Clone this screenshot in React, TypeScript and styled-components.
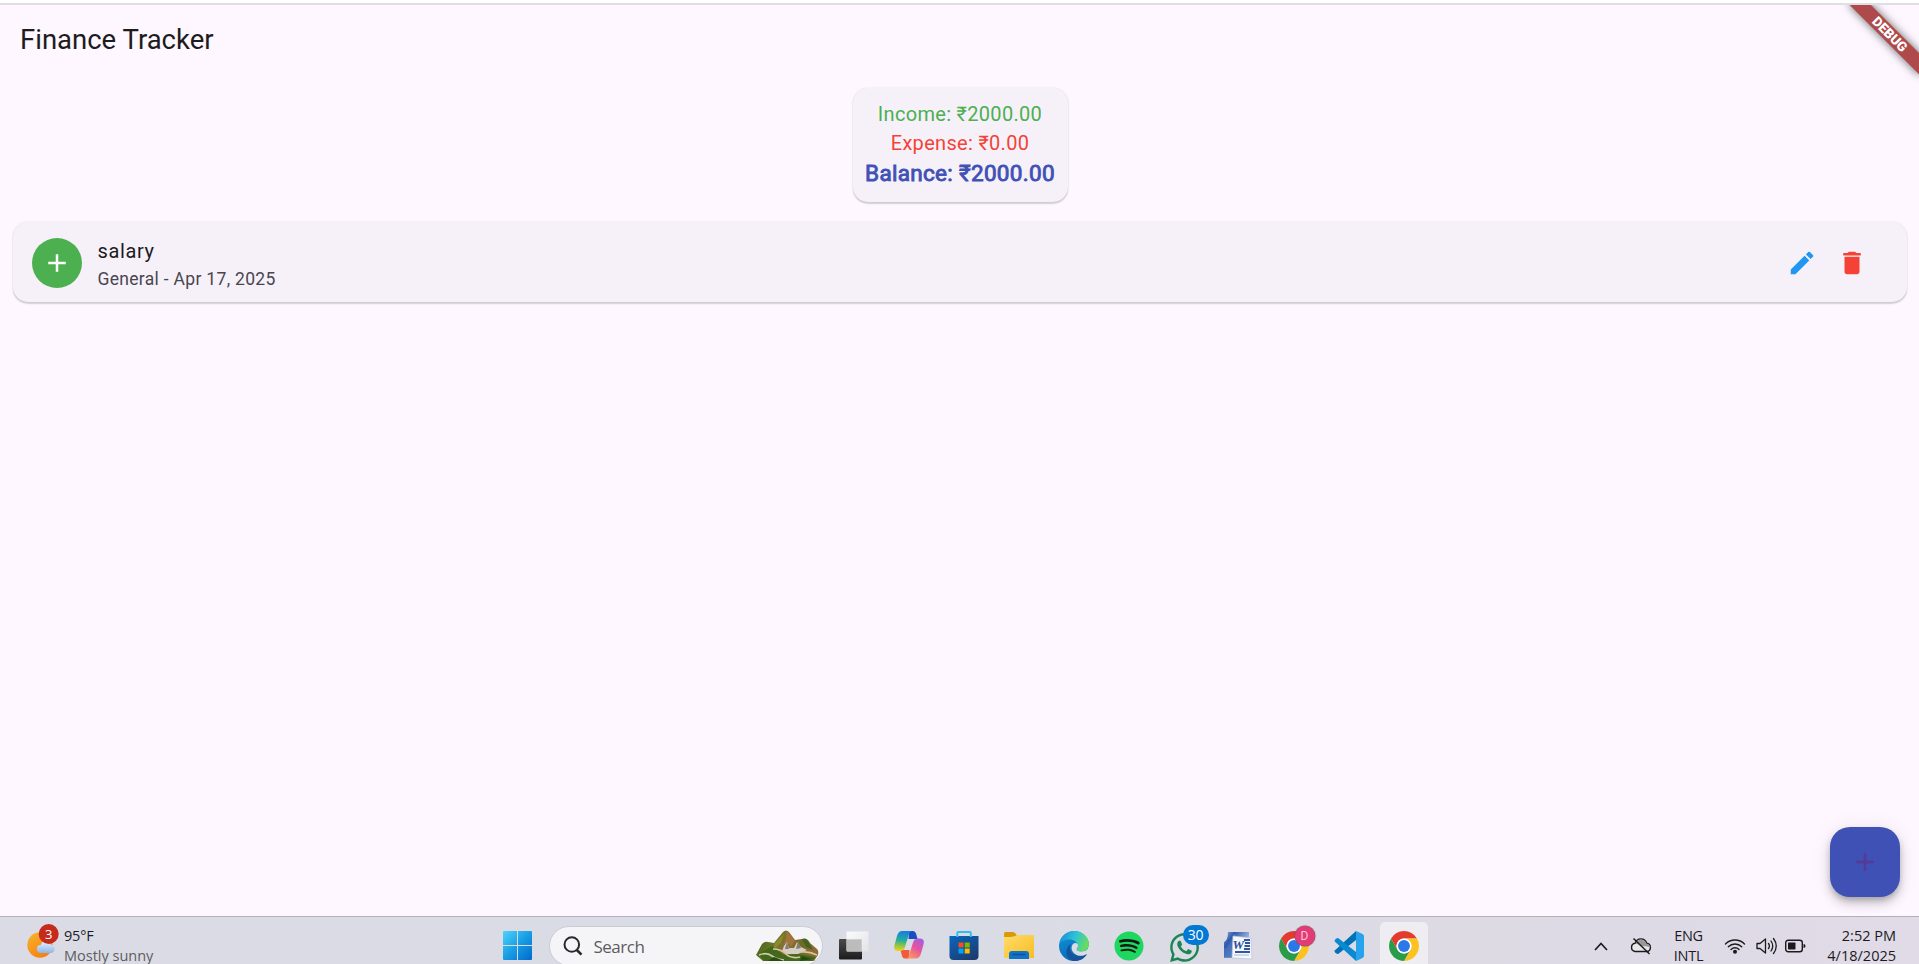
import React from "react";
import styled, { createGlobalStyle } from "styled-components";
import { MdAdd, MdDelete, MdEdit } from "react-icons/md";
import { FaSpotify, FaWhatsapp } from "react-icons/fa";

const GlobalStyle = createGlobalStyle`
  * { box-sizing: border-box; }
  body { margin: 0; overflow: hidden; background: #fef7ff; }
  svg { display: block; flex: none; }
`;

const Screen = styled.div`
  display: flex;
  flex-direction: column;
  width: 1919px;
  height: 964px;
  overflow: hidden;
  font-family: Roboto, sans-serif;
`;

const BrowserEdge = styled.div`
  flex: none;
  height: 5px;
  background: #fff;
  border-bottom: 2px solid #dfdfe0;
`;

const AppSurface = styled.main`
  position: relative;
  flex: none;
  height: 911px;
  overflow: hidden;
  background: #fef7ff;
`;

const AppBar = styled.header`
  display: flex;
  align-items: center;
  height: 70px;
  padding: 0 0 2px 20px;
`;

const Title = styled.h1`
  margin: 0;
  color: #1d1b20;
  font-size: 27.5px;
  font-weight: 400;
  line-height: 35px;
`;

const Card = styled.section`
  background: #f6f1f9;
  border-radius: 15px;
  box-shadow: 0 1.5px 1.5px rgba(0, 0, 0, 0.16), 0 0 2px rgba(0, 0, 0, 0.1);
`;

const SummaryCard = styled(Card)`
  display: flex;
  flex-direction: column;
  align-items: center;
  width: 215px;
  height: 114.5px;
  margin: 12.5px auto 20px 852.5px;
  padding-top: 12.5px;
`;

const SummaryLine = styled.div<{ $color: string; $strong?: boolean }>`
  color: ${(p) => p.$color};
  font-size: ${(p) => (p.$strong ? 22.5 : 20)}px;
  font-weight: 400;
  line-height: ${(p) => (p.$strong ? 31 : 29)}px;
  letter-spacing: 0.31px;
  white-space: nowrap;
  -webkit-text-stroke: ${(p) => (p.$strong ? "0.9px currentColor" : "0")};
`;

const EntryCard = styled(Card)`
  display: flex;
  align-items: center;
  height: 80px;
  margin: 0 12px 0 12.5px;
  padding: 1px 29.9px 0 19.9px;
`;

const Avatar = styled.div`
  display: grid;
  place-items: center;
  width: 50px;
  height: 50px;
  border-radius: 50%;
  background: #4caf50;
  color: #fff;
`;

const EntryText = styled.div`
  flex: 1;
  margin-left: 15.1px;
  padding-top: 3px;
`;

const EntryName = styled.div`
  color: #1d1b20;
  font-size: 20px;
  line-height: 29px;
  letter-spacing: 0.625px;
`;

const EntryMeta = styled.div`
  color: #49454f;
  font-size: 17.5px;
  line-height: 26px;
  letter-spacing: 0.31px;
`;

const IconButton = styled.button<{ $color: string }>`
  display: grid;
  place-items: center;
  width: 50px;
  height: 50px;
  padding: 0;
  border: 0;
  background: none;
  color: ${(p) => p.$color};
`;

const Fab = styled.button`
  position: absolute;
  right: 19px;
  bottom: 19px;
  display: grid;
  place-items: center;
  width: 70px;
  height: 70px;
  padding: 0;
  border: 0;
  border-radius: 20px;
  background: #3f51b5;
  color: #563a93;
  box-shadow: 0 4px 6px -1px rgba(0, 0, 0, 0.22), 0 7px 12px rgba(0, 0, 0, 0.14),
    0 1px 20px rgba(0, 0, 0, 0.08);
`;

const DebugBanner = styled.div`
  position: absolute;
  top: 34px;
  right: -50px;
  width: 100px;
  height: 15px;
  transform: rotate(45deg);
  transform-origin: 50px -34px;
  background: #ae4a4c;
  box-shadow: 0 0 10px rgba(0, 0, 0, 0.6);
  color: #fff;
  font-size: 13.5px;
  font-weight: 900;
  line-height: 15px;
  text-align: center;
`;

const Taskbar = styled.footer`
  display: grid;
  grid-template-columns: 490px 1fr auto;
  flex: none;
  height: 60px;
  border-top: 1px solid #b1afb8;
  background: linear-gradient(90deg, #dadbe4, #dadce5 50%, #dddae4 75%, #e0dbe7);
  font-family: "Open Sans", "Noto Sans", sans-serif;
  color: #1b1b1f;
`;

const Weather = styled.div`
  display: flex;
  align-items: flex-start;
  padding: 6px 0 0 26px;
`;

const WeatherIcon = styled.div`
  width: 38px;
  height: 40px;
`;

const WeatherText = styled.div`
  padding-top: 3px;
`;

const TextLine = styled.div<{ $muted?: boolean; $tight?: number }>`
  color: ${(p) => (p.$muted ? "#5d5d62" : "#1b1b1f")};
  font-size: 14.5px;
  line-height: 20px;
  letter-spacing: ${(p) => p.$tight ?? 0}px;
  white-space: nowrap;
`;

const Dock = styled.nav`
  display: flex;
  align-items: flex-start;
`;

const DockItem = styled.div<{ $active?: boolean }>`
  position: relative;
  display: flex;
  justify-content: center;
  width: ${(p) => (p.$active ? 48 : 55)}px;
  height: 50px;
  margin: ${(p) => (p.$active ? "5px 3.5px 0" : "5px 0 0")};
  padding-top: 9px;
  border-radius: 5px;
  background: ${(p) => (p.$active ? "#eeedf2" : "transparent")};
`;

const SearchBox = styled.div`
  display: flex;
  align-items: center;
  width: 274px;
  height: 40px;
  margin: 9px 4px 0 3.5px;
  padding: 0 3px 0 13px;
  border: 1px solid #cbccd5;
  border-radius: 20px;
  background: #f5f5f8;
`;

const SearchLabel = styled.span`
  flex: 1;
  margin-left: 11px;
  color: #5c5c60;
  font-size: 17px;
  letter-spacing: -0.5px;
`;

const CountBadge = styled.span`
  position: absolute;
  top: 3px;
  right: 3px;
  width: 26px;
  height: 20px;
  border-radius: 10px;
  background: #0078d4;
  color: #fff;
  font-size: 14px;
  line-height: 20px;
  text-align: center;
  letter-spacing: -0.3px;
`;

const ProfileBadge = styled.span`
  position: absolute;
  top: 4px;
  right: 7px;
  width: 20px;
  height: 20px;
  border-radius: 50%;
  background: #e33b75;
  box-shadow: 0 0 1px 0.5px #8c4860;
  color: #f8c4d6;
  font: 12px/20px Roboto, sans-serif;
  text-align: center;
`;

const Tray = styled.div`
  display: flex;
  align-items: flex-start;
  padding-right: 23px;
`;

const TrayIcon = styled.div<{ $width: number }>`
  display: grid;
  place-items: center;
  width: ${(p) => p.$width}px;
  height: 58px;
`;

const TrayText = styled.div<{ $width: number; $align: string }>`
  width: ${(p) => p.$width}px;
  padding-top: 9px;
  text-align: ${(p) => p.$align};
`;

const Clock = styled.div`
  width: 85px;
  padding-top: 9px;
  text-align: right;
`;

const WeatherGlyph = () => (
  <svg width="36" height="40" viewBox="0 0 36 40">
    <defs>
      <linearGradient id="sun" x1="0" y1="0" x2="0.6" y2="1">
        <stop stopColor="#f7b52c" />
        <stop offset="1" stopColor="#f5820f" />
      </linearGradient>
      <linearGradient id="cloud" x1="0" y1="0" x2="0" y2="1">
        <stop stopColor="#e4f2ff" />
        <stop offset="1" stopColor="#8fb4ea" />
      </linearGradient>
    </defs>
    <circle cx="14" cy="22" r="12.7" fill="url(#sun)" />
    <path d="M15 30a4 4 0 0 1-.3-8 5.3 5.3 0 0 1 9.8-.7 4.4 4.4 0 0 1 .5 8.7z" fill="url(#cloud)" />
    <circle cx="22.7" cy="11" r="10" fill="#c42b1c" />
    <text x="22.7" y="15.8" fontSize="13" textAnchor="middle" fill="#fff">3</text>
  </svg>
);

const StartGlyph = () => (
  <svg width="29" height="29" viewBox="0 0 29 29">
    <defs>
      <linearGradient id="win" gradientUnits="userSpaceOnUse" x1="0" y1="0" x2="29" y2="29">
        <stop stopColor="#4fd3fc" />
        <stop offset="0.5" stopColor="#189de4" />
        <stop offset="1" stopColor="#0069cc" />
      </linearGradient>
    </defs>
    <path d="M1 0H14V14H0V1Q0 0 1 0ZM15 0H28Q29 0 29 1V14H15ZM0 15H14V29H1Q0 29 0 28ZM15 15H29V28Q29 29 28 29H15Z" fill="url(#win)" />
  </svg>
);

const SearchGlyph = () => (
  <svg width="20" height="20" viewBox="0 0 20 20" fill="none" stroke="#29292d" strokeWidth="2">
    <circle cx="8.8" cy="8.5" r="7.3" />
    <path d="M13.8 14l4.7 4.6" strokeWidth="2.6" />
  </svg>
);

const MountainGlyph = () => (
  <svg width="63" height="32" viewBox="0 0 63 32">
    <defs>
      <linearGradient id="ridge" x1="0" y1="0" x2="1" y2="0.3">
        <stop stopColor="#35591a" />
        <stop offset="0.4" stopColor="#6d7926" />
        <stop offset="0.6" stopColor="#8f6a34" />
        <stop offset="0.8" stopColor="#6d6a24" />
        <stop offset="1" stopColor="#8c6b33" />
      </linearGradient>
    </defs>
    <path d="M0 25L6 14q3-3 6-2l6 1 9-11q3-3 6 0l6 8 7-1q5-2 8 4l7 6q2 2 1 6l-4 6H7z" fill="url(#ridge)" />
    <path d="M30 2q2-1 3 1l6 8-4 6-3-4-5 2q4-6 3-13z" fill="#a0743b" />
    <path d="M19 13l9-9-3 9-8 7z" fill="#8d892e" />
    <path d="M46 9q5-1 7 4l4 7-7-3z" fill="#456421" />
    <path d="M2 24l14-8 12 9 14-1 18 3-4 4H8z" fill="#42691b" />
    <path d="M26 21l2-5 3-4 2 6 5 0 3-6 4 5 6 3-9 4-11 0z" fill="#d5cfc3" />
    <path d="M31 12l2 7-4 0zM42 11l3 7-5 1z" fill="#827b70" />
    <path d="M3 25q7-3 13 1t12 4M17 19q8 0 13 5t14 3M45 22q8-1 16 3" fill="none" stroke="#d3c7a4" strokeWidth="1.700" />
    <path d="M18 27l10 4H12zM46 26l10 3-12 2z" fill="#254b12" />
  </svg>
);

const TaskViewGlyph = () => (
  <svg width="30" height="30" viewBox="0 0 30 30">
    <defs>
      <linearGradient id="pane" x1="0" y1="0" x2="0" y2="1">
        <stop stopColor="#4b4b4a" />
        <stop offset="1" stopColor="#1c1c1d" />
      </linearGradient>
      <linearGradient id="glass" x1="0" y1="0" x2="1" y2="1">
        <stop stopColor="#ffffff" />
        <stop offset="1" stopColor="#e4e4e6" />
      </linearGradient>
    </defs>
    <rect x="0" y="8" width="23" height="20.5" rx="1" fill="url(#pane)" />
    <rect x="7.5" y="0.5" width="22" height="20" rx="1" fill="url(#glass)" opacity="0.9" />
    <path d="M7.500 8.500H22.500V20.500H8.500q-1 0-1-1z" fill="#bcbcbd" />
  </svg>
);

const CopilotGlyph = () => (
  <svg width="30" height="28" viewBox="0 0 30 28">
    <defs>
      <linearGradient id="cpA" x1="0.3" y1="0" x2="0.2" y2="1">
        <stop stopColor="#167fe0" />
        <stop offset="0.45" stopColor="#26ad9d" />
        <stop offset="0.75" stopColor="#98c83c" />
        <stop offset="1" stopColor="#f5cf22" />
      </linearGradient>
      <linearGradient id="cpB" x1="0.8" y1="0" x2="0.2" y2="1">
        <stop stopColor="#a55be6" />
        <stop offset="0.45" stopColor="#e4559e" />
        <stop offset="1" stopColor="#ff9b59" />
      </linearGradient>
    </defs>
    <path d="M15 0h4q2.3 0 3 2.5L23.5 8h-9z" fill="#174fc2" />
    <path d="M15 27.5h-4q-2.3 0-3-2.5L6.5 19h9z" fill="#f05c39" />
    <path d="M8 0h10q-2 0-3 3l-4 13q-1 4-5 4H4Q-1 20 .5 14L3 5Q4.500 0 8 0z" fill="url(#cpA)" />
    <path d="M22 27.500H12q2 0 3-3l4-13q1-4 5-4h2q5 0 3.500 6L27 22.500Q25.500 27.500 22 27.500z" fill="url(#cpB)" />
  </svg>
);

const StoreGlyph = () => (
  <svg width="30" height="30" viewBox="0 0 30 30">
    <defs>
      <linearGradient id="bag" x1="0" y1="0" x2="0.7" y2="1">
        <stop stopColor="#0a66bd" />
        <stop offset="1" stopColor="#1c3c70" />
      </linearGradient>
    </defs>
    <path d="M.5 5h29v20q0 4-4 4h-21q-4 0-4-4z" fill="url(#bag)" />
    <path d="M8.300 6V2q0-1 1-1h11.500q1 0 1 1v4" fill="none" stroke="#31bdf4" strokeWidth="2" />
    <path d="M9.500 11.500h5v5h-5z" fill="#f25022" />
    <path d="M15.700 11.500h5v5h-5z" fill="#7fba00" />
    <path d="M9.500 17.500h5v5h-5z" fill="#00a4ef" />
    <path d="M15.700 17.500h5v5h-5z" fill="#ffb900" />
  </svg>
);

const FolderGlyph = () => (
  <svg width="30" height="28" viewBox="0 0 30 28">
    <defs>
      <linearGradient id="folder" x1="0" y1="0" x2="1" y2="1">
        <stop stopColor="#ffdc69" />
        <stop offset="1" stopColor="#f8bd24" />
      </linearGradient>
    </defs>
    <path d="M0 7V2.500Q0 1 1.500 1H9q1.500 0 2.500 1.500L13 5z" fill="#d89a08" />
    <path d="M0 6h10l3-2h15.500Q30 4 30 5.500V27H0z" fill="url(#folder)" />
    <path d="M5 28v-5q0-3 3-3h14q3 0 3 3v5z" fill="#0e73c9" />
    <path d="M9 23.500h12" stroke="#174f92" strokeWidth="1.300" strokeLinecap="round" />
  </svg>
);

const EdgeGlyph = () => (
  <svg width="30" height="30" viewBox="0 0 30 30">
    <defs>
      <linearGradient id="edTop" x1="0" y1="0.2" x2="1" y2="0.5">
        <stop stopColor="#188bd2" />
        <stop offset="0.5" stopColor="#2dc2da" />
        <stop offset="1" stopColor="#69de59" />
      </linearGradient>
      <linearGradient id="edBody" x1="0" y1="0" x2="0.4" y2="1">
        <stop stopColor="#1496de" />
        <stop offset="1" stopColor="#0868b6" />
      </linearGradient>
    </defs>
    <path d="M15 0A15 15 0 1 0 27 24L30 13A15 15 0 0 0 15 0z" fill="url(#edBody)" />
    <path d="M.4 12.500C1.700 5 8 0 15 0c9 0 15 6.500 15 13 0 5-4 7.500-8 7.500-3 0-4.500-1.300-4.500-2.200 0-.8 1-1.300 1-3.300C18.500 11 15 8.500 10.500 8.500 6 8.500 2 10.500.4 12.500z" fill="url(#edTop)" />
    <path d="M12 12.500c-3 5 0 12 7 12.500 3 .2 5.500-.8 7.300-2 1-.6 1.700.2 1.200 1C24.500 28.500 20 30 15 30 9 28.500 6 23.500 8 18c.8-2.500 2.300-4.500 4-5.500z" fill="#15539a" />
    <path d="M17.800 17.500c-.5 1 0 2.700 3.700 3 3.500.1 6.200-1 8.200-3.500l.3 1c-.5 3-2 5-3 5.500-4 2.300-9 1.500-12-1.300-3-3-3-6.700-1-9.200 2-2 5-.8 5 1.500 0 1.300-.6 2-1.200 3z" fill="#dadce5" />
  </svg>
);

const SpotifyMark = styled.div`
  width: 30px;
  height: 30px;
  border-radius: 50%;
  background: radial-gradient(circle, #101b14 62%, transparent 64%);
  color: #1ed760;
`;

const WordGlyph = () => (
  <svg width="30" height="30" viewBox="0 0 30 30">
    <defs>
      <linearGradient id="wd" x1="0" y1="0" x2="1" y2="0.7">
        <stop stopColor="#93b2e0" />
        <stop offset="0.3" stopColor="#2f58ab" />
        <stop offset="1" stopColor="#dbe8f7" />
      </linearGradient>
    </defs>
    <path d="M4 1h21v25H0V11Q4 9 4 1z" fill="url(#wd)" />
    <path d="M0 17q7 1 9-14l3 0v24H0z" fill="#4671bc" opacity="0.75" />
    <path d="M9 5l18 2 1 21-20-1z" fill="#f4f7fc" stroke="#b8c4da" strokeWidth="0.700" />
    <path d="M20 9h6M21 12h5M20.500 15h5.500M20 18h6M11 21h15" stroke="#34569f" strokeWidth="1.900" />
    <path d="M10 24h15" stroke="#a9bad9" strokeWidth="1" />
    <text x="8.500" y="18" fontFamily="Liberation Serif, serif" fontWeight="700" fontStyle="italic" fontSize="13" fill="#2b4e9b">W</text>
  </svg>
);

const ChromeGlyph = () => (
  <svg width="30" height="30" viewBox="2 2 44 44">
    <path d="M4.950 13A22 22 0 0 1 43.050 13H24A11 11 0 0 0 14.470 29.500z" fill="#e33b2e" />
    <path d="M43.050 13A22 22 0 0 1 24 46L33.530 29.500A11 11 0 0 0 24 13z" fill="#fcc31e" />
    <path d="M24 46A22 22 0 0 1 4.950 13L14.470 29.500A11 11 0 0 0 33.530 29.500z" fill="#2a9b48" />
    <circle cx="24" cy="24" r="11" fill="#fff" />
    <circle cx="24" cy="24" r="8.700" fill="#2b78e8" />
  </svg>
);

const CodeGlyph = () => (
  <svg width="30" height="30" viewBox="0 0 30 30">
    <path d="M22 0L1 19.200q-1 1 0 2l1.500 1.400q1 .8 2 .1L22 9z" fill="#0072b7" />
    <path d="M22 30L1 10.800q-1-1 0-2L2.500 7.400q1-.8 2-.1L22 21z" fill="#0a89d1" />
    <path d="M22 0l6.500 3Q30 3.700 30 5.300V24.700q0 1.600-1.500 2.300L22 30z" fill="#27a3ee" />
  </svg>
);

const ChevronGlyph = () => (
  <svg width="14" height="9" viewBox="0 0 14 9" fill="none" stroke="#1b1b1f" strokeWidth="1.700">
    <path d="M1 8l6-6.500L13 8" />
  </svg>
);

const CloudOffGlyph = () => (
  <svg width="22" height="18" viewBox="0 0 22 18">
    <path d="M5 14.500a4.200 4.200 0 0 1 .2-8.300 6 6 0 0 1 11.500 0 4.200 4.200 0 0 1 .3 8.300z" fill="#e8e8e8" stroke="#1b1b1f" strokeWidth="1.400" />
    <path d="M5.500 6.500a5.800 5.800 0 0 1 10.800 0q3.500.5 4 4-5-2-8-1-4-2.500-6.800-3z" fill="#999" />
    <path d="M3.500 1.500l16 15.500" stroke="#1b1b1f" strokeWidth="1.500" />
  </svg>
);

const WifiGlyph = () => (
  <svg width="22" height="17" viewBox="0 0 22 17" fill="none" stroke="#1b1b1f" strokeWidth="1.400" strokeLinecap="round">
    <path d="M1.500 6a13.400 13.400 0 0 1 19 0M4.300 8.700a9.500 9.500 0 0 1 13.400 0M7 11.400a5.700 5.700 0 0 1 8 0" />
    <circle cx="11" cy="13.700" r="1.300" fill="#1b1b1f" />
  </svg>
);

const SpeakerGlyph = () => (
  <svg width="22" height="18" viewBox="0 0 22 18" fill="none" stroke="#1b1b1f" strokeWidth="1.300" strokeLinecap="round" strokeLinejoin="round">
    <path d="M1 6.500h3L9.500 2v14L4 11.500H1zM12.500 6.500q1.800 2.500 0 5M15 4q3.500 5 0 10M17.500 1.500q5.500 7.500 0 15" />
  </svg>
);

const BatteryGlyph = () => (
  <svg width="21" height="14" viewBox="0 0 21 14">
    <rect x="0.700" y="1.200" width="16.600" height="11.600" rx="2.500" fill="none" stroke="#1b1b1f" strokeWidth="1.400" />
    <rect x="3" y="3.500" width="7.500" height="7" rx="0.800" fill="#1b1b1f" />
    <path d="M18.500 5q2 0 2 2t-2 2z" fill="#1b1b1f" />
  </svg>
);

export default function App() {
  return (
    <Screen>
      <GlobalStyle />
      <BrowserEdge />
      <AppSurface>
        <AppBar>
          <Title>Finance Tracker</Title>
        </AppBar>
        <SummaryCard>
          <SummaryLine $color="#4caf50">Income: ₹2000.00</SummaryLine>
          <SummaryLine $color="#f44336">Expense: ₹0.00</SummaryLine>
          <SummaryLine $color="#3f51b5" $strong>Balance: ₹2000.00</SummaryLine>
        </SummaryCard>
        <EntryCard>
          <Avatar><MdAdd size={30} /></Avatar>
          <EntryText>
            <EntryName>salary</EntryName>
            <EntryMeta>General - Apr 17, 2025</EntryMeta>
          </EntryText>
          <IconButton $color="#2196f3" aria-label="Edit"><MdEdit size={30} /></IconButton>
          <IconButton $color="#f44336" aria-label="Delete"><MdDelete size={30} /></IconButton>
        </EntryCard>
        <Fab aria-label="Add"><MdAdd size={30} /></Fab>
        <DebugBanner>DEBUG</DebugBanner>
      </AppSurface>
      <Taskbar>
        <Weather>
          <WeatherIcon><WeatherGlyph /></WeatherIcon>
          <WeatherText>
            <TextLine $tight={-0.2}>95°F</TextLine>
            <TextLine $muted>Mostly sunny</TextLine>
          </WeatherText>
        </Weather>
        <Dock>
          <DockItem><StartGlyph /></DockItem>
          <SearchBox>
            <SearchGlyph />
            <SearchLabel>Search</SearchLabel>
            <MountainGlyph />
          </SearchBox>
          <DockItem><TaskViewGlyph /></DockItem>
          <DockItem><CopilotGlyph /></DockItem>
          <DockItem><StoreGlyph /></DockItem>
          <DockItem><FolderGlyph /></DockItem>
          <DockItem><EdgeGlyph /></DockItem>
          <DockItem><SpotifyMark><FaSpotify size={30} /></SpotifyMark></DockItem>
          <DockItem>
            <FaWhatsapp size={33} color="#1b8654" />
            <CountBadge>30</CountBadge>
          </DockItem>
          <DockItem><WordGlyph /></DockItem>
          <DockItem>
            <ChromeGlyph />
            <ProfileBadge>D</ProfileBadge>
          </DockItem>
          <DockItem><CodeGlyph /></DockItem>
          <DockItem $active><ChromeGlyph /></DockItem>
        </Dock>
        <Tray>
          <TrayIcon $width={40}><ChevronGlyph /></TrayIcon>
          <TrayIcon $width={40}><CloudOffGlyph /></TrayIcon>
          <TrayText $width={55} $align="center">
            <TextLine $tight={-0.3}>ENG</TextLine>
            <TextLine $tight={-0.2}>INTL</TextLine>
          </TrayText>
          <TrayIcon $width={38}><WifiGlyph /></TrayIcon>
          <TrayIcon $width={26}><SpeakerGlyph /></TrayIcon>
          <TrayIcon $width={31}><BatteryGlyph /></TrayIcon>
          <Clock>
            <TextLine>2:52 PM</TextLine>
            <TextLine>4/18/2025</TextLine>
          </Clock>
        </Tray>
      </Taskbar>
    </Screen>
  );
}
